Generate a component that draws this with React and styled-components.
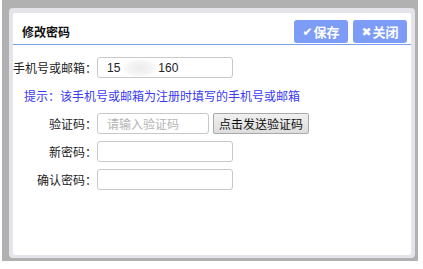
import React from "react";
import styled, { createGlobalStyle } from "styled-components";

const GlobalStyle = createGlobalStyle`
  body {
    margin: 0;
    background: #ffffff;
    font-family: "Liberation Sans", "Noto Sans CJK SC", sans-serif;
    font-size: 12px;
  }
`;

const Backdrop = styled.div`
  margin-left: 2px;
  width: 416px;
  height: 261px;
  box-sizing: border-box;
  padding: 8px 3px 3px 7px;
  background: #b1b1b1;
`;

const Frame = styled.div`
  height: 100%;
  box-sizing: border-box;
  padding: 5px 4px 3px 4px;
  background: #e4e4ea;
  border-radius: 4px;
  display: flex;
`;

const Panel = styled.div`
  flex: 1;
  background: #ffffff;
  border-radius: 2px;
  display: flex;
  flex-direction: column;
`;

const Header = styled.div`
  height: 31px;
  display: flex;
  align-items: center;
  justify-content: space-between;
  padding: 0 4px 0 9px;
  border-bottom: 1px solid #7c9ff0;
`;

const Title = styled.span`
  font-weight: bold;
  font-size: 12px;
  color: #111;
  margin-top: 5px;
`;

const Buttons = styled.div`
  display: flex;
  gap: 5px;
  margin-top: 6px;
`;

const HeadButton = styled.button`
  width: 54px;
  height: 23px;
  border: none;
  border-radius: 3px;
  background: #7d9cf5;
  color: #fff;
  font-family: inherit;
  font-weight: bold;
  font-size: 13px;
  padding: 0;
  display: flex;
  align-items: center;
  justify-content: center;
  gap: 1px;
  cursor: pointer;
`;

const Mark = styled.span`
  font-family: "DejaVu Sans", sans-serif;
  font-size: 12px;
`;

const Form = styled.div`
  display: flex;
  flex-direction: column;
  padding-top: 12px;
`;

const Row = styled.div`
  display: flex;
  align-items: center;
  height: ${(p) => p.$h || 28}px;
`;

const Label = styled.label`
  width: 84px;
  text-align: right;
  color: #222;
  font-size: 12px;
  flex-shrink: 0;
`;

const Input = styled.div`
  box-sizing: border-box;
  width: ${(p) => p.$w || 136}px;
  height: 21px;
  border: 1px solid #c8c8c8;
  border-radius: 3px;
  padding-left: 9px;
  display: flex;
  align-items: center;
  font-size: 12px;
  color: ${(p) => (p.$placeholder ? "#b4b4b4" : "#222")};
`;

const Blur = styled.span`
  display: inline-block;
  width: 34px;
  height: 18px;
  margin: 0 1px 0 3px;
  border-radius: 50%;
  background: radial-gradient(ellipse, #ececec 0%, #f6f6f6 55%, #ffffff 80%);
`;

const Hint = styled.div`
  color: #3a3af2;
  font-size: 12px;
  padding-left: 11px;
  height: 28px;
  display: flex;
  align-items: center;
  margin-top: 3px;
`;

const SendButton = styled.button`
  margin-left: 4px;
  width: 96px;
  height: 21px;
  box-sizing: border-box;
  border: 1px solid #a9a9a9;
  border-radius: 2px;
  background: linear-gradient(#f0f0f0, #dddddd);
  font-family: inherit;
  font-size: 12px;
  color: #111;
  padding: 0;
`;

export default function App() {
  return (
    <>
      <GlobalStyle />
      <Backdrop>
        <Frame>
          <Panel>
            <Header>
              <Title>修改密码</Title>
              <Buttons>
                <HeadButton>
                  <Mark>✔</Mark>保存
                </HeadButton>
                <HeadButton>
                  <Mark>✖</Mark>关闭
                </HeadButton>
              </Buttons>
            </Header>
            <Form>
              <Row $h={21}>
                <Label>手机号或邮箱：</Label>
                <Input>
                  15<Blur />160
                </Input>
              </Row>
              <Hint>提示：该手机号或邮箱为注册时填写的手机号或邮箱</Hint>
              <Row>
                <Label>验证码：</Label>
                <Input $w={112} $placeholder>请输入验证码</Input>
                <SendButton>点击发送验证码</SendButton>
              </Row>
              <Row>
                <Label>新密码：</Label>
                <Input />
              </Row>
              <Row>
                <Label>确认密码：</Label>
                <Input />
              </Row>
            </Form>
          </Panel>
        </Frame>
      </Backdrop>
    </>
  );
}
